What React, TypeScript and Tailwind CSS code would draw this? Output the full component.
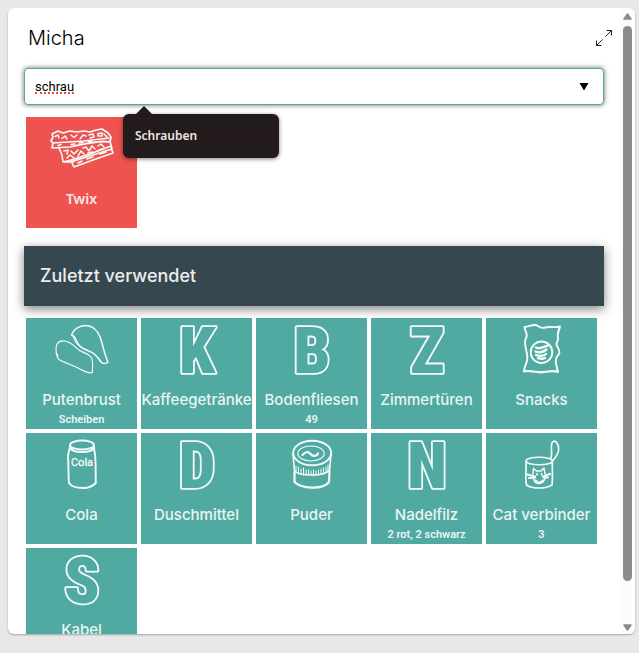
import type { ReactNode } from "react";

type Item = { name: string; detail?: string; icon: ReactNode };

function Drawing({ children, wide = false }: { children: ReactNode; wide?: boolean }) {
  return (
    <svg
      viewBox={wide ? "0 0 64 50" : "0 0 50 50"}
      className={`${wide ? "w-16" : "w-[50px]"} h-[50px] shrink-0 overflow-visible`}
      fill="none"
      stroke="#f4fbfa"
      strokeWidth="1.9"
      strokeLinecap="round"
      strokeLinejoin="round"
      aria-hidden="true"
    >
      {children}
    </svg>
  );
}

function Letter({ char }: { char: string }) {
  return (
    <Drawing>
      <text
        x="25"
        y="48"
        textAnchor="middle"
        strokeWidth="3.6"
        paintOrder="stroke"
        className="fill-[#50aaa1] font-['Roboto_Condensed','Roboto',sans-serif] text-[65px] font-black"
      >
        {char}
      </text>
    </Drawing>
  );
}

const turkey = (
  <Drawing>
    <path strokeWidth="1.5" d="M14.5 10C17 3 24 .5 29 .5C36 1 41 6 43.500 13C46 21 48 31 51 37C49 39 46 39 44 37C40 31 37 28 33 26.500C27 24 22 22 20 17C18.500 13 17 10 14.500 10Z" />
    <path strokeWidth="1.2" d="M-.5 20C1 17 4 15.500 8 16C14 17 17 21 21.800 25C26 28 31 28 34 32C37 36 35 43 35.500 47.500C31 49 27 46 23 44C16 40 8 38 2 34.500C-1 32-1.500 25-.5 20ZM-.5 28L1 31" />
    <path d="M14.800 9.500L16.500 12.500C18.500 19 23 22.500 30 25.500" strokeWidth="1" />
  </Drawing>
);

const snackBag = (
  <Drawing>
    <path d="M7.500 2C12 2 14-.5 18.500 0C22 1 23 3.500 27 2.800C32 1 37 3 43 1.500C42 7 40 8 41 13C42 16 38 17 40 21C42 24 43 28 42 29C37 34 39 39 41 47C33 45 30 47 24 47.500C16 47 12 45 7 46.500C7 40 12 37 10 29C9 23 7 19 8.500 14C12 10 8 7 7.500 2Z" />
    <path strokeWidth="1.300" d="M7 45.500C18 47 27 47.500 41 45.500M42 3L40.500 9" />
    <circle cx="24.500" cy="27.300" r="10.800" />
    <path strokeWidth="2.400" d="M19 22.500C23 25 28 21 31 20.500M18.500 26.500C22 28.500 27 26.500 29.500 24.500M19 30C22 31.500 27 31 29 29M21 33.200C24 34 26 34 28 33" />
  </Drawing>
);

const can = (
  <Drawing>
    <ellipse cx="25" cy="5" rx="12" ry="4.500" strokeWidth="2" />
    <path strokeWidth="2" d="M13 6C14 11 18 12 25 12S36 11 37 6" />
    <path d="M13 6C13 11 11 11 11 17C12 28 11 34 12 43C15 47.500 21 48 26 48C32 48 36 46 38.800 43C38.500 32 39 24 38 14C37 11 37 9 37 6" />
    <text x="25" y="26" textAnchor="middle" strokeWidth="0.300" className="fill-[#f4fbfa] font-['Roboto',sans-serif] text-[11px]">
      Cola
    </text>
  </Drawing>
);

const powder = (
  <Drawing>
    <ellipse cx="25.200" cy="13" rx="19" ry="12.300" />
    <ellipse cx="24" cy="13.500" rx="13.200" ry="7.500" strokeWidth="1.100" />
    <path strokeWidth="2.200" d="M15.500 15C18 12 21 11 23.500 14C26 17 30 16 31 13.500" />
    <path strokeWidth="1.600" d="M6 14L7.500 31C12 36 37 37 42.500 30L44 14" />
    <path strokeWidth="1" d="M9 26V33M11.500 27V34M14 29V33M16.500 28V35M19 30V34M21.500 30V35M24 31V35M26.500 30V36M29 31V35M31.500 30V35M34 29V34M36.500 28V34M39 27V33M41 25V32" />
    <path strokeWidth="2.200" d="M7.500 32V42C14 49 36 50 42 42L42.500 31" />
  </Drawing>
);

const catTin = (
  <Drawing>
    <ellipse cx="22.200" cy="21" rx="13.200" ry="3.800" strokeWidth="1.600" />
    <path strokeWidth="1.700" d="M9 21.500C9.500 30 8 38 9.500 45C15 49 29 49 35 45C36 36 35 28 35.400 21" />
    <path strokeWidth="1.700" d="M34 18C36 12 33 7 35 3C36 0 39 .5 40.500 4C43 9 41 14 38 18C36 20 35 21 34.500 23" />
    <path strokeWidth="1.500" d="M16 34L16.500 28.500L19.500 31H24L27 28L28 34M16.500 36C15 46 28 46 28 37M18.500 40C21 43 24 43 26 40" />
    <path strokeWidth="2.200" d="M10 34.500L18 36.500M12 38L18 37.500M26 36.500L33 34M27 37.500L31 37.500" />
    <path strokeWidth="1.500" d="M20 33.500V35M24.500 33.500V35" />
  </Drawing>
);

const chocolateBars = (
  <Drawing wide>
    <path strokeWidth="1.700" d="M2 10L8 7L13 9L20 7L27 8L34 7L40 8L46 6L52 5L58 9L61 13L60 18C48 16 35 20 20 23L2 24L3 19L1 17L3 13Z" />
    <path strokeWidth="1.500" d="M3 19L18 18L34 17L59 14" />
    <path strokeWidth="1.600" d="M9 24L12 31L13 38L20 38C35 34 48 29 62 25L60 17M24 37L22 39L24 43L43 36L63 29L61 23M13 38L21 36L40 30L61 22" />
    <path strokeWidth="1.500" d="M5 12.500L8 11L9 14M12 14.500L15 12L17 15M21 11L24 13.500L27 11M30 15L33 11L36 12M39 11L43 10L44 13L40 14M48 9.500L52 9L52 12L48 12ZM54 10L57 13M8 21.500L11 20.500M21 20.500L25 20M29 19L33 18.500M38 17.500L42 17" />
    <path strokeWidth="1.500" d="M14 27L18 26L17 30M21 27L24 30L28 26M17 34L20 31L24 34M28 32L31 27L34 30M33 24L36 23L39 27L42 22L45 25M38 29L43 28M48 22L51 20L54 23M47 27L52 25M28 39L32 37M37 35L43 33M50 30L56 28" />
  </Drawing>
);

const recent: Item[] = [
  { name: "Putenbrust", detail: "Scheiben", icon: turkey },
  { name: "Kaffeegetränke", icon: <Letter char="K" /> },
  { name: "Bodenfliesen", detail: "49", icon: <Letter char="B" /> },
  { name: "Zimmertüren", icon: <Letter char="Z" /> },
  { name: "Snacks", icon: snackBag },
  { name: "Cola", icon: can },
  { name: "Duschmittel", icon: <Letter char="D" /> },
  { name: "Puder", icon: powder },
  { name: "Nadelfilz", detail: "2 rot, 2 schwarz", icon: <Letter char="N" /> },
  { name: "Cat verbinder", detail: "3", icon: catTin },
  { name: "Kabel", icon: <Letter char="S" /> },
];

function Tile({ item }: { item: Item }) {
  return (
    <button type="button" className="flex size-[111px] flex-col items-center bg-[#50aaa1] pt-[7px] text-[#e9f5f3]">
      {item.icon}
      <span className="mt-[15px] whitespace-nowrap text-[15px] font-medium leading-5">{item.name}</span>
      {item.detail && (
        <span className="mt-0.5 whitespace-nowrap font-['Roboto',sans-serif] text-[11px] font-semibold leading-4">{item.detail}</span>
      )}
    </button>
  );
}

export default function App() {
  return (
    <div className="h-screen overflow-hidden bg-[#e8e8e8] pt-2 pr-1 pb-[19px] pl-2 font-['Inter',sans-serif]">
      <div className="flex h-full overflow-hidden rounded-md bg-white shadow-[0_1px_2px_rgba(0,0,0,0.3)]">
        <main className="min-w-0 flex-1 overflow-hidden px-4">
          <header className="flex h-[60px] items-center justify-between pl-1">
            <h1 className="text-[20px] font-light leading-6 text-black">Micha</h1>
            <button type="button" aria-label="Vergrößern" className="-mr-2">
              <svg viewBox="0 0 16 16" className="size-4" fill="none" stroke="#222" aria-hidden="true">
                <path d="M9.500 6.500L15.500 .5M10.500 .5H15.500V5.500M6.500 9.500L.5 15.500M.5 10.500V15.500H5.500" />
              </svg>
            </button>
          </header>

          <div className="relative">
            <div className="flex h-[37px] items-center rounded border border-[#50aaa1] bg-white pr-3 pl-2.5 shadow-[0_0_5px_rgba(0,0,0,0.6)]">
              <input
                type="text"
                aria-label="Artikel suchen"
                defaultValue="schrau"
                spellCheck={false}
                className="min-w-0 flex-1 bg-transparent font-['Roboto',sans-serif] text-[13px] leading-5 text-black outline-none"
              />
              <button type="button" aria-label="Vorschläge anzeigen" className="px-0.5">
                <svg viewBox="0 0 10 8" className="h-2 w-2.5" aria-hidden="true">
                  <path d="M.5 0H9.500L5 7.500Z" fill="#000" />
                </svg>
              </button>
            </div>
            <span className="absolute top-6 left-[11px] w-[39px] border-b-2 border-dotted border-[#f04848]" />
            <div className="absolute top-[46px] left-[99px] z-10 flex h-11 w-[156px] items-center rounded-md bg-[#231a1b] px-3 shadow-[0_1px_4px_rgba(0,0,0,0.5)]">
              <svg viewBox="0 0 18 9" className="absolute -top-2 left-3 h-[9px] w-[18px]" aria-hidden="true">
                <path d="M0 9L9 0L18 9Z" fill="#231a1b" />
              </svg>
              <span className="font-['Noto_Sans',sans-serif] text-[12px] font-semibold leading-5 text-[#ece6e8]">Schrauben</span>
            </div>
          </div>

          <div className="mt-3 px-0.5">
            <button type="button" className="flex size-[111px] flex-col items-center bg-[#ee534f] pt-[7px] text-[#fbe6e5]">
              {chocolateBars}
              <span className="mt-[15px] font-['Noto_Sans',sans-serif] text-[14px] font-semibold leading-5">Twix</span>
            </button>
          </div>

          <h2 className="mt-[18px] flex h-[60px] items-center bg-[#37474f] px-4 text-[18px] font-medium leading-6 text-[#ebedee] shadow-[0_3px_10px_rgba(0,0,0,0.5)]">
            Zuletzt verwendet
          </h2>

          <div className="mt-3 flex flex-wrap gap-1 px-0.5">
            {recent.map((item) => (
              <Tile key={item.name} item={item} />
            ))}
          </div>
        </main>

        <div className="flex w-[15px] shrink-0 flex-col items-center bg-[#fcfcfc] pt-[5px] pb-[3px]" aria-hidden="true">
          <svg viewBox="0 0 9 7" className="h-[7px] w-[9px]">
            <path d="M4.500 1L8 6H1Z" fill="#8b8b8b" stroke="#8b8b8b" strokeWidth="1.500" strokeLinejoin="round" />
          </svg>
          <div className="mt-1.5 mb-[43px] w-[9px] flex-1 rounded-full bg-[#8b8b8b]" />
          <svg viewBox="0 0 9 7" className="h-[7px] w-[9px]">
            <path d="M4.500 6L8 1H1Z" fill="#8b8b8b" stroke="#8b8b8b" strokeWidth="1.500" strokeLinejoin="round" />
          </svg>
        </div>
      </div>
    </div>
  );
}
